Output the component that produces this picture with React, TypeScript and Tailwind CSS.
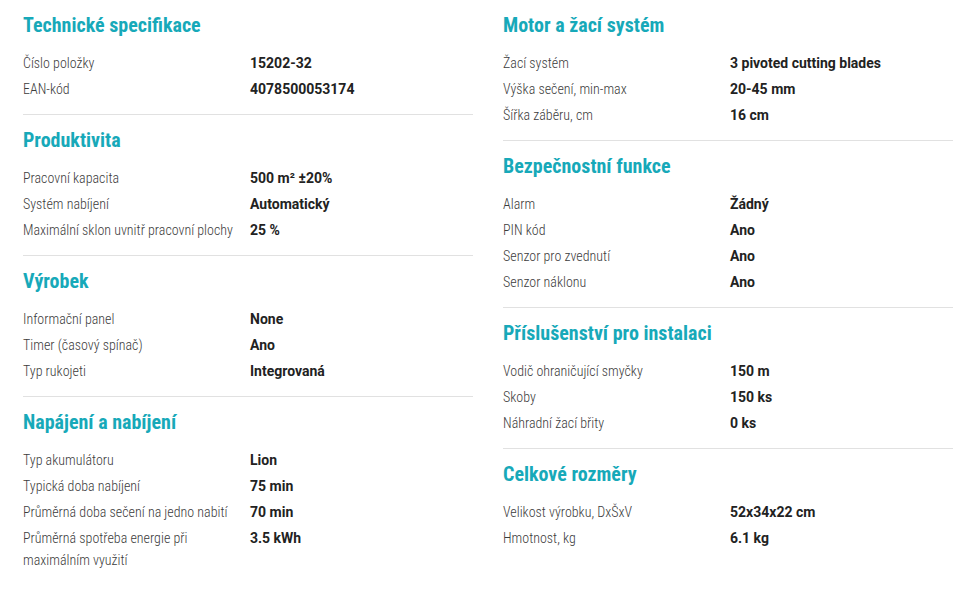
const leftSections = [
  {
    title: 'Technické specifikace',
    rows: [
      ['Číslo položky', '15202-32'],
      ['EAN-kód', '4078500053174'],
    ],
  },
  {
    title: 'Produktivita',
    rows: [
      ['Pracovní kapacita', '500 m² ±20%'],
      ['Systém nabíjení', 'Automatický'],
      ['Maximální sklon uvnitř pracovní plochy', '25 %'],
    ],
  },
  {
    title: 'Výrobek',
    rows: [
      ['Informační panel', 'None'],
      ['Timer (časový spínač)', 'Ano'],
      ['Typ rukojeti', 'Integrovaná'],
    ],
  },
  {
    title: 'Napájení a nabíjení',
    rows: [
      ['Typ akumulátoru', 'Lion'],
      ['Typická doba nabíjení', '75 min'],
      ['Průměrná doba sečení na jedno nabití', '70 min'],
      ['Průměrná spotřeba energie při maximálním využití', '3.5 kWh'],
    ],
  },
];

const rightSections = [
  {
    title: 'Motor a žací systém',
    rows: [
      ['Žací systém', '3 pivoted cutting blades'],
      ['Výška sečení, min-max', '20-45 mm'],
      ['Šířka záběru, cm', '16 cm'],
    ],
  },
  {
    title: 'Bezpečnostní funkce',
    rows: [
      ['Alarm', 'Žádný'],
      ['PIN kód', 'Ano'],
      ['Senzor pro zvednutí', 'Ano'],
      ['Senzor náklonu', 'Ano'],
    ],
  },
  {
    title: 'Příslušenství pro instalaci',
    rows: [
      ['Vodič ohraničující smyčky', '150 m'],
      ['Skoby', '150 ks'],
      ['Náhradní žací břity', '0 ks'],
    ],
  },
  {
    title: 'Celkové rozměry',
    rows: [
      ['Velikost výrobku, DxŠxV', '52x34x22 cm'],
      ['Hmotnost, kg', '6.1 kg'],
    ],
  },
];

type Section = { title: string; rows: string[][] };

function SpecSection({ section, last }: { section: Section; last: boolean }) {
  return (
    <section className={`pt-[13px] pb-[12px] ${last ? '' : 'border-b border-[#e1e1e1]'}`}>
      <h2 className="font-['Roboto',sans-serif] font-stretch-semi-condensed text-[20px] leading-[24px] font-bold text-[#17a9b9]">
        {section.title}
      </h2>
      <dl className="mt-[13px]">
        {section.rows.map(([label, value]) => (
          <div key={label} className="grid grid-cols-[227px_1fr] py-[2px] text-[14px] leading-[22px]">
            <dt className="font-['Roboto_Condensed',sans-serif] font-light text-[#3c3c3c] pr-4">{label}</dt>
            <dd className="font-['Roboto',sans-serif] font-bold text-[#222]">{value}</dd>
          </div>
        ))}
      </dl>
    </section>
  );
}

export default function App() {
  return (
    <div className="min-h-[589px] bg-white px-[23px] grid grid-cols-2 gap-[30px] font-['Roboto',sans-serif]">
      <div>
        {leftSections.map((s, i) => (
          <SpecSection key={s.title} section={s} last={i === leftSections.length - 1} />
        ))}
      </div>
      <div>
        {rightSections.map((s, i) => (
          <SpecSection key={s.title} section={s} last={i === rightSections.length - 1} />
        ))}
      </div>
    </div>
  );
}
